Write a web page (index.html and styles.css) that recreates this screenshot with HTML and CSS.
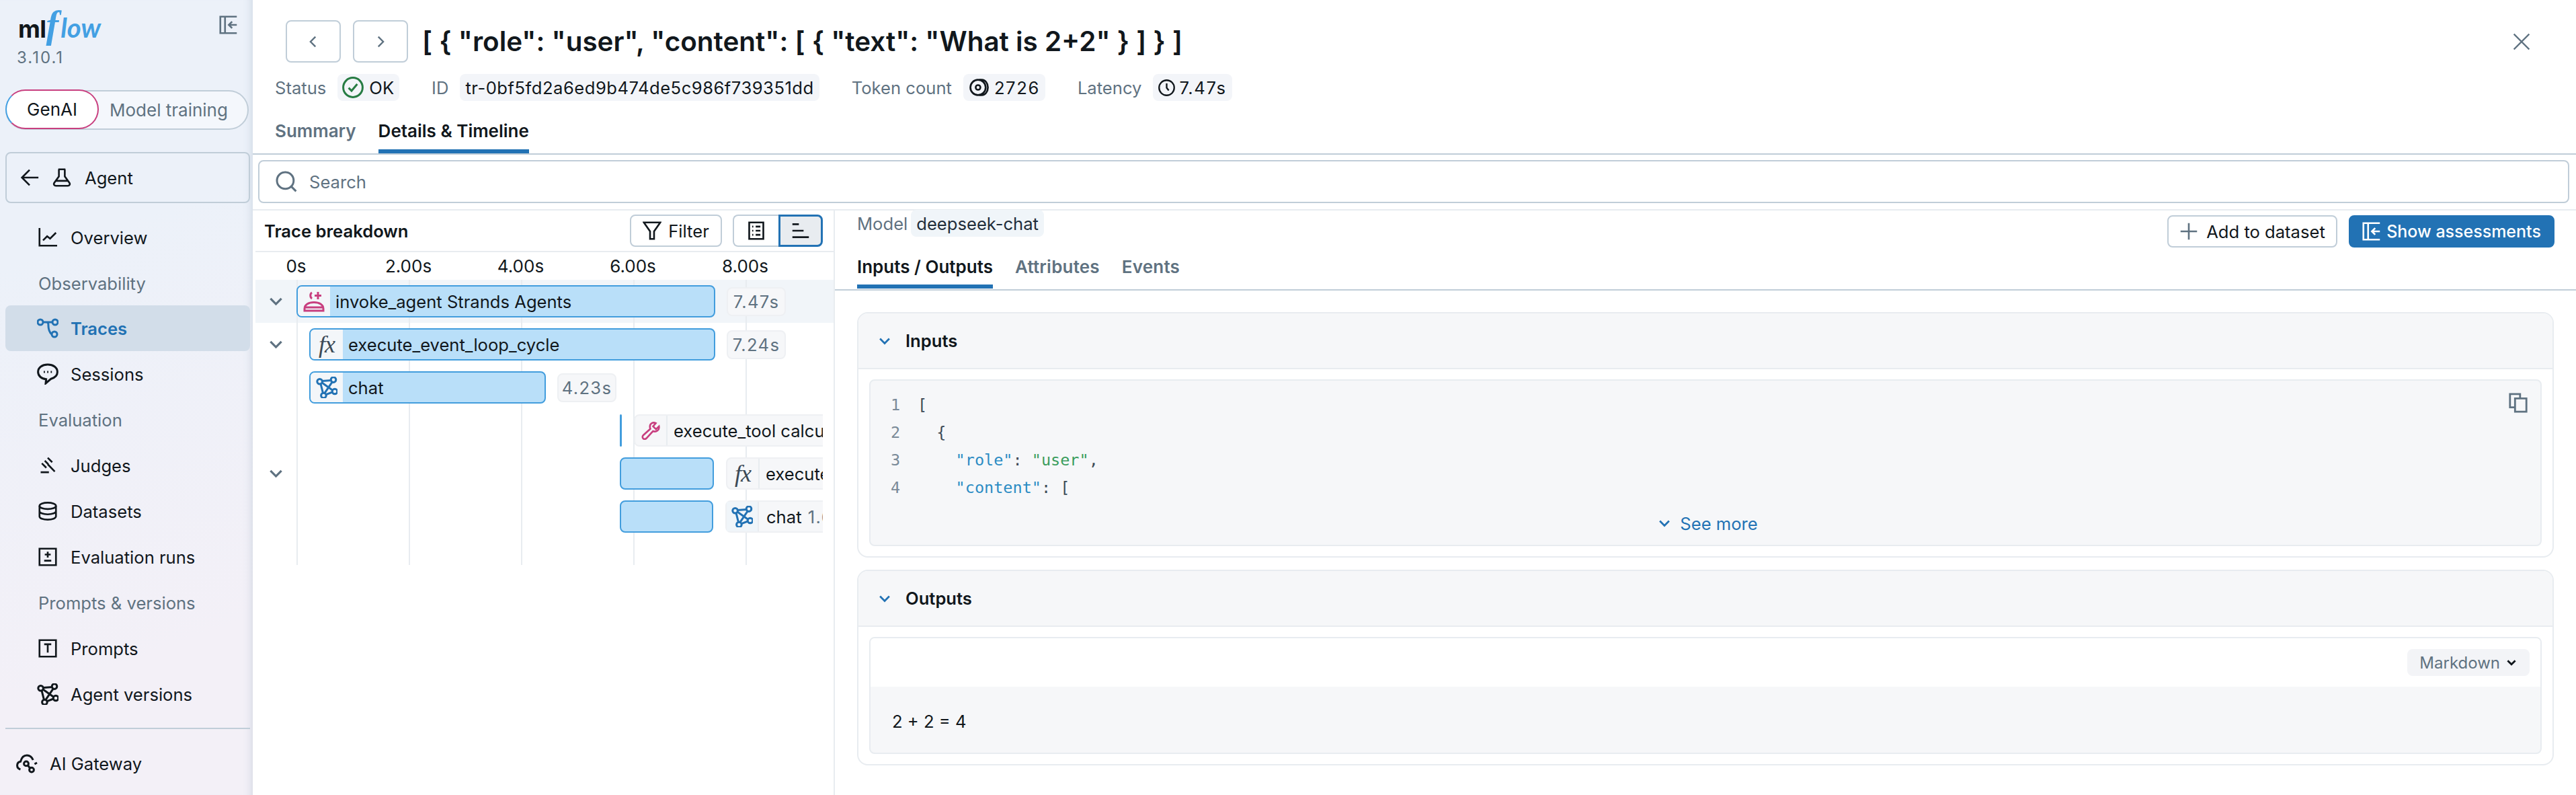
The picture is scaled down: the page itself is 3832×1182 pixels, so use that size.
FILE: index.html
```html
<!DOCTYPE html>
<html lang="en">
<head>
    <meta charset="UTF-8">
    <title>MLflow trace</title>
    <link rel="stylesheet" href="styles.css">
</head>
<body>
    <svg class="sprites" width="0" height="0">
        <symbol id="i-collapse" viewBox="0 0 16 16"><path d="M15 1H1v14h14M5 1v14M15 8H8.5M11 5.2 8.2 8l2.8 2.8"/></symbol>
        <symbol id="i-back" viewBox="0 0 16 16"><path d="M15.5 8H1.5M8 1.5 1.5 8 8 14.500"/></symbol>
        <symbol id="i-flask" viewBox="0 0 16 16"><path d="M5 1h6M5.500 1v6L1.500 12.500C.8 13.800 1.500 15 3 15h10c1.500 0 2.200-1.200 1.500-2.500L10.500 7V1M3 10.800h10"/></symbol>
        <symbol id="i-chart" viewBox="0 0 16 16"><path d="M1 0v15h15M4 10.500l3.500-3.500 2.500 2 5-5"/></symbol>
        <symbol id="i-traces" viewBox="0 0 16 16"><circle cx="2.500" cy="3.500" r="2"/><circle cx="13.500" cy="3.500" r="2"/><circle cx="13" cy="12.500" r="2"/><path d="M4.500 3.500h7M7 3.500c1.500 0 1.500 1.200 1.500 3s.8 5 2.500 6"/></symbol>
        <symbol id="i-chat" viewBox="0 0 16 16"><path d="M8 1C4 1 .8 3.200.8 6.500c0 3 2.700 5.200 6 5.400L6.500 15l4-3.400c2.800-.8 4.700-2.700 4.700-5.100C15.200 3.200 12 1 8 1Z"/><path d="M5 6.500h.9M7.600 6.500h.9M10.200 6.500h.9"/></symbol>
        <symbol id="i-gavel" viewBox="0 0 16 16"><path d="M2 13.800h7M3 6.200l3.800 3.800M5.500 4l3 3M8 1.500l3.800 3.800M8 7l6 6.200"/></symbol>
        <symbol id="i-db" viewBox="0 0 16 16"><ellipse cx="8" cy="3.500" rx="7" ry="2.700"/><path d="M1 3.500v9c0 1.500 3 2.700 7 2.700s7-1.200 7-2.700v-9M1 8c0 1.500 3 2.700 7 2.700s7-1.200 7-2.700"/></symbol>
        <symbol id="i-plusminus" viewBox="0 0 16 16"><path d="M1 1h14v14H1zM8 3.500v5M5.500 6h5M5 11.200h6"/></symbol>
        <symbol id="i-prompt" viewBox="0 0 16 16"><path d="M1 1h14v14H1zM5 4.500h6M8 4.500v7"/></symbol>
        <symbol id="i-agent" viewBox="0 0 16 16"><circle cx="2.800" cy="3.600" r="1.900"/><circle cx="13" cy="2.300" r="1.900"/><circle cx="14" cy="11" r="1.900"/><circle cx="5.700" cy="14" r="1.900"/><path d="M4.500 4.500 12.200 10M11.300 2.800 4.500 3.200M12.200 3.800 6.500 12.200M7.500 13.300l4.700-1.800M3.500 5.300l1.700 6.800"/></symbol>
        <symbol id="i-gateway" viewBox="0 0 16 16"><path d="M3.200 12.500C1.500 12 .7 10.800.8 9.300c.1-1.400 1.100-2.500 2.500-2.700C4 3.800 5.800 2 8 2c2.200 0 3.800 1.500 4.600 3.500M15.500 7.500l-1.800 1"/><circle cx="7.500" cy="8.200" r="1.700"/><circle cx="11.500" cy="12.800" r="1.700"/><path d="M8.700 9.500l1.600 2"/></symbol>
        <symbol id="i-chev-left" viewBox="0 0 16 16"><path d="M10 3.500 5.500 8l4.500 4.500"/></symbol>
        <symbol id="i-chev-right" viewBox="0 0 16 16"><path d="M6 3.500 10.500 8 6 12.500"/></symbol>
        <symbol id="i-chev-down" viewBox="0 0 16 16"><path d="M3 5.500 8 10.500l5-5"/></symbol>
        <symbol id="i-close" viewBox="0 0 16 16"><path d="M1 1l14 14M15 1 1 15"/></symbol>
        <symbol id="i-check" viewBox="0 0 16 16"><circle cx="8" cy="8" r="7.200"/><path d="M4.800 8.300 7 10.500l4.200-5" class="check-mark"/></symbol>
        <symbol id="i-coins" viewBox="0 0 16 16"><circle cx="6.800" cy="8" r="6.500"/><circle cx="6.800" cy="8" r="2"/><path d="M8 1.500h2c3 0 5.200 3 5.200 6.500s-2.200 6.500-5.200 6.500H8"/></symbol>
        <symbol id="i-clock" viewBox="0 0 16 16"><circle cx="8" cy="8" r="7.200"/><path d="M8 3.800V8l2 2.500"/></symbol>
        <symbol id="i-search" viewBox="0 0 16 16"><circle cx="7.200" cy="7.200" r="6.200"/><path d="M11.800 11.800l3.400 3.400"/></symbol>
        <symbol id="i-filter" viewBox="0 0 16 16"><path d="M1 1h14L9.700 8.500V15H6.300V8.500Z"/></symbol>
        <symbol id="i-list" viewBox="0 0 16 16"><path d="M2 1h12v14H2zM4.500 4.500h1M7.500 4.500h4M4.500 8h1M7.500 8h4M4.500 11.500h1M7.500 11.500h4"/></symbol>
        <symbol id="i-gantt" viewBox="0 0 16 16"><path d="M1 2.500h5.500M1 8h9.500M1 13.500h14"/></symbol>
        <symbol id="i-user-spark" viewBox="0 0 16 16"><path d="M1 15v-1.500C1 10.500 4 8.800 8 8.800s7 1.700 7 4.700V15ZM1 12.500h14"/><path d="M6.500 1.500C5 2.300 5 5 6.500 6M11 1v5.500M8.500 3.700h5"/></symbol>
        <symbol id="i-wrench" viewBox="0 0 16 16"><path d="M15 4.500 12.500 7 10 4.500l2.300-2.700C10 .7 7.300 2 7.300 4.800c0 .8.200 1.300.4 1.800L1.700 12c-1 1-.8 2.200-.1 2.800.8.700 2 .6 2.800-.2l5.500-6c2.800 1 5.700-.8 5.100-4.100Z"/></symbol>
        <symbol id="i-plus" viewBox="0 0 16 16"><path d="M8 1v14M1 8h14"/></symbol>
        <symbol id="i-copy" viewBox="0 0 16 16"><path d="M5 11.500H1.500V1h8v3.500M5.500 4.500h9v10.500h-9z"/></symbol>
    </svg>

    <div class="app">
        <aside class="sidebar">
            <div class="brand">
                <div class="logo"><span class="logo-ml">ml</span><span class="logo-f">f</span><span class="logo-flow">low</span></div>
                <svg class="icon icon-muted"><use href="#i-collapse"/></svg>
            </div>
            <div class="version">3.10.1</div>
            <div class="mode-switch">
                <span class="mode mode-on">GenAI</span>
                <span class="mode">Model training</span>
            </div>
            <div class="back-btn">
                <svg class="icon"><use href="#i-back"/></svg>
                <svg class="icon"><use href="#i-flask"/></svg>
                <span>Agent</span>
            </div>
            <nav class="nav">
                <a class="nav-item"><svg class="icon"><use href="#i-chart"/></svg>Overview</a>
                <div class="nav-label">Observability</div>
                <a class="nav-item nav-item-active"><svg class="icon icon-big"><use href="#i-traces"/></svg>Traces</a>
                <a class="nav-item"><svg class="icon icon-big"><use href="#i-chat"/></svg>Sessions</a>
                <div class="nav-label">Evaluation</div>
                <a class="nav-item"><svg class="icon"><use href="#i-gavel"/></svg>Judges</a>
                <a class="nav-item"><svg class="icon"><use href="#i-db"/></svg>Datasets</a>
                <a class="nav-item"><svg class="icon"><use href="#i-plusminus"/></svg>Evaluation runs</a>
                <div class="nav-label">Prompts &amp; versions</div>
                <a class="nav-item"><svg class="icon"><use href="#i-prompt"/></svg>Prompts</a>
                <a class="nav-item"><svg class="icon icon-big"><use href="#i-agent"/></svg>Agent versions</a>
            </nav>
            <div class="nav-rule"></div>
            <a class="nav-item nav-item-top"><svg class="icon icon-wide"><use href="#i-gateway"/></svg>AI Gateway</a>
        </aside>

        <main class="main">
            <header class="header">
                <div class="title-row">
                    <button class="nav-btn"><svg class="icon icon-sm icon-muted"><use href="#i-chev-left"/></svg></button>
                    <button class="nav-btn"><svg class="icon icon-sm icon-muted"><use href="#i-chev-right"/></svg></button>
                    <h1>[ { "role": "user", "content": [ { "text": "What is 2+2" } ] } ]</h1>
                    <svg class="icon close-icon"><use href="#i-close"/></svg>
                </div>
                <div class="meta-row">
                    <div class="meta"><span class="meta-key">Status</span><span class="tag"><svg class="icon icon-ok"><use href="#i-check"/></svg>OK</span></div>
                    <div class="meta"><span class="meta-key">ID</span><span class="tag tag-id">tr-0bf5fd2a6ed9b474de5c986f739351dd</span></div>
                    <div class="meta"><span class="meta-key">Token count</span><span class="tag tag-num"><svg class="icon icon-coins"><use href="#i-coins"/></svg>2726</span></div>
                    <div class="meta"><span class="meta-key">Latency</span><span class="tag tag-num"><svg class="icon icon-clock"><use href="#i-clock"/></svg>7.47s</span></div>
                </div>
                <div class="tabs tabs-main">
                    <span class="tab">Summary</span>
                    <span class="tab tab-on">Details &amp; Timeline</span>
                </div>
            </header>

            <div class="search"><svg class="icon icon-muted icon-big"><use href="#i-search"/></svg>Search</div>

            <div class="panes">
                <section class="trace">
                    <div class="trace-head">
                        <span class="trace-title">Trace breakdown</span>
                        <button class="btn btn-filter"><svg class="icon"><use href="#i-filter"/></svg>Filter</button>
                        <div class="view-switch">
                            <span class="view"><svg class="icon"><use href="#i-list"/></svg></span>
                            <span class="view view-on"><svg class="icon"><use href="#i-gantt"/></svg></span>
                        </div>
                    </div>
                    <div class="ruler">
                        <span>0s</span><span>2.00s</span><span>4.00s</span><span>6.00s</span><span>8.00s</span>
                    </div>
                    <div class="timeline">
                        <div class="grid-lines"><i></i><i></i><i></i><i></i><i></i></div>

                        <div class="tl-row tl-row-on">
                            <svg class="icon icon-sm chev"><use href="#i-chev-down"/></svg>
                            <div class="track">
                                <div class="bar" style="width:623px">
                                    <span class="bar-icon"><svg class="icon icon-big ic-pink"><use href="#i-user-spark"/></svg></span>
                                    <span class="bar-text">invoke_agent Strands Agents</span>
                                </div>
                                <span class="dur">7.47s</span>
                            </div>
                        </div>
                        <div class="tl-row">
                            <svg class="icon icon-sm chev"><use href="#i-chev-down"/></svg>
                            <div class="track">
                                <div class="bar" style="margin-left:19px;width:604px">
                                    <span class="bar-icon"><span class="fx">fx</span></span>
                                    <span class="bar-text">execute_event_loop_cycle</span>
                                </div>
                                <span class="dur">7.24s</span>
                            </div>
                        </div>
                        <div class="tl-row">
                            <span class="chev-gap"></span>
                            <div class="track">
                                <div class="bar" style="margin-left:19px;width:352px">
                                    <span class="bar-icon"><svg class="icon icon-big ic-blue"><use href="#i-agent"/></svg></span>
                                    <span class="bar-text">chat</span>
                                </div>
                                <span class="dur">4.23s</span>
                            </div>
                        </div>
                        <div class="tl-row">
                            <span class="chev-gap"></span>
                            <div class="track">
                                <div class="bar bar-thin" style="margin-left:481px;width:3px"></div>
                                <div class="label-out">
                                    <span class="out-icon"><svg class="icon ic-pink"><use href="#i-wrench"/></svg></span>
                                    <span class="out-text">execute_tool calculator</span>
                                </div>
                            </div>
                        </div>
                        <div class="tl-row">
                            <svg class="icon icon-sm chev"><use href="#i-chev-down"/></svg>
                            <div class="track">
                                <div class="bar" style="margin-left:481px;width:140px"></div>
                                <div class="label-out">
                                    <span class="out-icon"><span class="fx">fx</span></span>
                                    <span class="out-text">execute_event_loop_cycle</span>
                                </div>
                            </div>
                        </div>
                        <div class="tl-row">
                            <span class="chev-gap"></span>
                            <div class="track">
                                <div class="bar" style="margin-left:481px;width:139px"></div>
                                <div class="label-out">
                                    <span class="out-icon out-icon-blue"><svg class="icon icon-big ic-blue"><use href="#i-agent"/></svg></span>
                                    <span class="out-text out-text-tight">chat <em>1.68s</em></span>
                                </div>
                            </div>
                        </div>
                    </div>
                </section>

                <section class="detail">
                    <div class="detail-top">
                        <div class="detail-left">
                            <div class="meta meta-model"><span class="meta-key">Model</span><span class="tag tag-blue">deepseek-chat</span></div>
                            <div class="tabs tabs-detail">
                                <span class="tab tab-on">Inputs / Outputs</span>
                                <span class="tab">Attributes</span>
                                <span class="tab">Events</span>
                            </div>
                        </div>
                        <div class="actions">
                            <button class="btn btn-add"><svg class="icon icon-muted"><use href="#i-plus"/></svg>Add to dataset</button>
                            <button class="btn btn-primary"><svg class="icon"><use href="#i-collapse"/></svg>Show assessments</button>
                        </div>
                    </div>

                    <div class="sections">
                        <div class="panel">
                            <div class="panel-head"><svg class="icon icon-xs"><use href="#i-chev-down"/></svg>Inputs</div>
                            <div class="panel-body">
                                <div class="code-box">
                                    <svg class="icon icon-muted copy-icon"><use href="#i-copy"/></svg>
                                    <div class="code-line"><span class="ln">1</span><span class="pun">[</span></div>
                                    <div class="code-line"><span class="ln">2</span><span class="pun">  {</span></div>
                                    <div class="code-line"><span class="ln">3</span><span class="pun">    </span><span class="key">"role"</span><span class="pun">: </span><span class="str">"user"</span><span class="pun">,</span></div>
                                    <div class="code-line"><span class="ln">4</span><span class="pun">    </span><span class="key">"content"</span><span class="pun">: [</span></div>
                                    <div class="see-more"><svg class="icon icon-xs"><use href="#i-chev-down"/></svg>See more</div>
                                </div>
                            </div>
                        </div>
                        <div class="panel">
                            <div class="panel-head"><svg class="icon icon-xs"><use href="#i-chev-down"/></svg>Outputs</div>
                            <div class="panel-body">
                                <div class="output-box">
                                    <div class="output-bar"><span class="format">Markdown<svg class="icon icon-xs"><use href="#i-chev-down"/></svg></span></div>
                                    <div class="output-text">2 + 2 = 4</div>
                                </div>
                            </div>
                        </div>
                    </div>
                </section>
            </div>
        </main>
    </div>
</body>
</html>
```

FILE: styles.css
```css
* {
    box-sizing: border-box;
}
body {
    margin: 0;
    font-family: Inter, "Noto Sans", sans-serif;
    font-size: 25.6px;
    color: #11171c;
    background: #fff;
}
button {
    font: inherit;
    color: inherit;
    background: #fff;
    cursor: pointer;
}
.sprites {
    position: absolute;
}
.app {
    display: flex;
    width: 3832px;
    height: 1182px;
    overflow: hidden;
}

/* icons */
.icon {
    width: 28px;
    height: 28px;
    flex: none;
    fill: none;
    stroke: currentColor;
    stroke-width: 1.5;
}
.icon-sm {
    width: 26px;
    height: 26px;
}
.icon-xs {
    width: 22px;
    height: 22px;
    stroke-width: 2;
}
.icon-big {
    width: 32px;
    height: 32px;
    margin: 0 -2px;
}
.icon-muted {
    color: #5f7281;
}
.ic-pink {
    color: #c83f7f;
}
.ic-blue {
    color: #2272b4;
}
.fx {
    font: italic 36px "Liberation Serif", serif;
    letter-spacing: -1px;
    color: #3c4a56;
}

/* sidebar */
.sidebar {
    width: 376px;
    flex: none;
    padding: 0 4px 0 8px;
    background: linear-gradient(160deg, #ecf1f9 30%, #f3f0f7 80%);
    box-shadow: inset -14px 0 14px -14px rgba(150, 170, 190, 0.45);
}
.brand {
    display: flex;
    justify-content: space-between;
    align-items: center;
    height: 74px;
    padding: 0 18px 0 19px;
}
.logo {
    display: flex;
    align-items: baseline;
    line-height: 1;
    white-space: nowrap;
}
.logo-ml {
    font-weight: 700;
    font-size: 36px;
    letter-spacing: -0.5px;
    color: #11171c;
}
.logo-f {
    font-family: "Liberation Serif", serif;
    font-style: italic;
    font-weight: 700;
    font-size: 56px;
    color: #43a0e3;
    margin-right: 3px;
}
.logo-flow {
    font-family: Lato, sans-serif;
    font-style: italic;
    font-size: 40px;
    font-weight: 700;
    color: #43a0e3;
}
.version {
    height: 60px;
    padding: 0 0 0 17px;
    line-height: 24px;
    color: #5f7281;
    font-size: 24px;
    letter-spacing: 2px;
}
.mode-switch {
    display: flex;
    align-items: center;
    width: 362px;
    height: 59px;
    border: 2px solid #c0cdd8;
    border-radius: 30px;
    background: rgba(255, 255, 255, 0.45);
}
.mode {
    padding-left: 16px;
    color: #5f7281;
    font-size: 26px;
    white-space: nowrap;
}
.mode-on {
    width: 139px;
    height: 59px;
    margin: -2px 0 0 -2px;
    padding: 0;
    line-height: 55px;
    text-align: center;
    color: #11171c;
    background: #fff;
    border: 2px solid #c83f7f;
    border-left-color: #43a0e3;
    border-top-color: #c83f7f;
    border-radius: 30px;
}
.back-btn {
    display: flex;
    align-items: center;
    gap: 20px;
    width: 364px;
    height: 76px;
    margin-top: 33px;
    padding-left: 20px;
    border: 2px solid #c0cdd8;
    border-radius: 8px;
}
.nav {
    margin-top: 17px;
}
.nav-item {
    display: flex;
    align-items: center;
    gap: 20px;
    width: 364px;
    height: 68px;
    padding-left: 49px;
    border-radius: 8px;
}
.nav-item-active {
    margin-top: -1px;
    color: #2272b4;
    font-weight: 600;
    background: #d2dde9;
}
.nav-item-top {
    margin-top: 17px;
    padding-left: 16px;
    gap: 18px;
}
.nav-label {
    display: flex;
    align-items: center;
    height: 68px;
    padding-left: 49px;
    color: #5f7281;
}
.nav-rule {
    width: 364px;
    height: 2px;
    margin-top: 16px;
    background: #c0cdd8;
}
.icon-wide {
    width: 32px;
    height: 32px;
}

/* header */
.main {
    flex: 1;
    min-width: 0;
}
.header {
    height: 230px;
    padding-top: 30px;
    border-bottom: 2px solid #c0cdd8;
}
.title-row {
    display: flex;
    align-items: center;
    height: 63px;
    padding: 0 68px 0 49px;
}
.nav-btn {
    display: flex;
    justify-content: center;
    align-items: center;
    width: 82px;
    height: 63px;
    margin-right: 18px;
    padding: 0;
    border: 2px solid #c0cdd8;
    border-radius: 8px;
}
h1 {
    flex: 1;
    margin: 0 0 0 3px;
    font-size: 40.4px;
    font-weight: 600;
    line-height: 63px;
}
.close-icon {
    color: #5f7281;
    width: 26px;
    height: 26px;
    stroke-width: 1.4;
}
.meta-row {
    display: flex;
    gap: 48px;
    height: 40px;
    margin-top: 17px;
    padding-left: 33px;
}
.meta {
    display: flex;
    align-items: center;
    gap: 17px;
}
.meta-key {
    color: #5f7281;
}
.tag {
    display: flex;
    align-items: center;
    gap: 8px;
    height: 40px;
    padding: 0 8px;
    border-radius: 8px;
    background: #f3f5f9;
    white-space: nowrap;
}
.tag .icon-ok {
    width: 32px;
    height: 32px;
    margin-left: -1px;
    color: #277c43;
}
.tag-id {
    letter-spacing: 0.5px;
}
.tag-num {
    gap: 6px;
    letter-spacing: 1.6px;
}
.icon-coins {
    width: 32px;
    height: 28px;
}
.icon-clock {
    width: 25px;
    height: 25px;
}
.tag-blue {
    background: #f0f5f9;
    color: #1f2d3a;
}
.tabs {
    display: flex;
    gap: 33px;
}
.tab {
    height: 58px;
    color: #5f7281;
    font-size: 26px;
    font-weight: 600;
    line-height: 50px;
}
.tab-on {
    color: #11171c;
    border-bottom: 6px solid #2272b4;
}
.tabs-main {
    margin-top: 20px;
    padding-left: 33px;
}

/* search */
.search {
    display: flex;
    align-items: center;
    gap: 20px;
    height: 64px;
    margin: 8px 10px 0 8px;
    padding-left: 26px;
    border: 2px solid #c0cdd8;
    border-radius: 8px;
    color: #5f7281;
}
.panes {
    display: flex;
    height: 871px;
    margin-top: 9px;
    border-top: 2px solid #e8ecf0;
}

/* trace pane */
.trace {
    width: 864px;
    flex: none;
    padding-left: 4px;
}
.trace-head {
    display: flex;
    align-items: center;
    height: 62px;
    padding-right: 16px;
    border-bottom: 2px solid #e8ecf0;
}
.trace-title {
    flex: 1;
    padding-left: 13px;
    font-weight: 600;
}
.btn {
    display: flex;
    align-items: center;
    justify-content: center;
    gap: 10px;
    height: 48px;
    padding: 0;
    border: 2px solid #c0cdd8;
    border-radius: 8px;
    white-space: nowrap;
}
.btn-filter {
    width: 137px;
    margin-right: 16px;
}
.view-switch {
    display: flex;
    height: 48px;
}
.view {
    display: flex;
    justify-content: center;
    align-items: center;
    width: 68px;
    border: 2px solid #c0cdd8;
    border-radius: 8px 0 0 8px;
    border-right: 0;
}
.view-on {
    width: 66px;
    background: #e8ecf0;
    border: 3px solid #2272b4;
    border-radius: 0 8px 8px 0;
}
.ruler {
    display: grid;
    grid-template-columns: repeat(5, 167px);
    height: 41px;
    margin-left: -23px;
    line-height: 42px;
    font-size: 26px;
    text-align: center;
    white-space: nowrap;
}
.timeline {
    position: relative;
    height: 424px;
}
.grid-lines {
    position: absolute;
    top: 0;
    bottom: 0;
    left: 61px;
    display: flex;
    gap: 165px;
    z-index: 1;
}
.grid-lines i {
    width: 2px;
    background: #e8ecf0;
}
.tl-row {
    position: relative;
    display: flex;
    align-items: center;
    height: 64px;
    padding-right: 16px;
}
.tl-row-on {
    background: #f1f5f9;
}
.chev {
    width: 61px;
    color: #5f7281;
    stroke-width: 2;
}
.chev-gap {
    width: 61px;
    flex: none;
}
.track {
    position: relative;
    z-index: 2;
    flex: 1;
    min-width: 0;
    display: flex;
    align-items: center;
    overflow: hidden;
}
.bar {
    display: flex;
    flex: none;
    height: 48px;
    border: 2px solid #429ddd;
    border-radius: 8px;
    background: #b9dff9;
    overflow: hidden;
}
.bar-thin {
    border-width: 0;
    border-radius: 2px;
    background: #429ddd;
}
.bar-icon {
    display: flex;
    justify-content: center;
    align-items: center;
    width: 48px;
    flex: none;
    background: #f3f6f9;
}
.bar-text {
    padding-left: 8px;
    line-height: 46px;
    white-space: nowrap;
}
.dur {
    flex: none;
    width: 88px;
    height: 43px;
    margin-left: 17px;
    border: 2px solid #eef0f3;
    border-radius: 8px;
    background: #f6f7f9;
    color: #5f7281;
    line-height: 39px;
    text-align: center;
    letter-spacing: 1.3px;
}
.label-out {
    display: flex;
    flex: none;
    height: 48px;
    margin-left: 18px;
    border: 2px solid #eef0f3;
    border-radius: 8px;
    background: #f6f7f9;
}
.out-icon {
    display: flex;
    justify-content: center;
    align-items: center;
    width: 48px;
    border-right: 2px solid #e8ecf0;
}
.out-icon-blue {
    background: #f0f5f9;
}
.out-text {
    padding: 0 9px;
    line-height: 46px;
    white-space: nowrap;
}
.out-text-tight {
    padding-left: 11px;
}
.out-text-tight em {
    font-style: normal;
    color: #5f7281;
    letter-spacing: 1.5px;
    padding-left: 2px;
}

/* detail pane */
.detail {
    flex: 1;
    min-width: 0;
    border-left: 2px solid #e8ecf0;
}
.detail-top {
    display: flex;
    justify-content: space-between;
    height: 119px;
    padding: 0 32px 0 33px;
    border-bottom: 2px solid #c0cdd8;
}
.detail-left {
    display: flex;
    flex: 1;
    flex-direction: column;
}
.meta-model {
    gap: 5px;
    height: 40px;
    margin-top: -1px;
}
.tabs-detail {
    margin-top: 18px;
}
.tabs-detail .tab {
    height: 59px;
    line-height: 53px;
    letter-spacing: 0.2px;
}
.tabs-detail .tab-on {
    letter-spacing: 0;
}
.actions {
    display: flex;
    gap: 17px;
    padding-top: 7px;
}
.btn-add {
    width: 253px;
    gap: 12px;
}
.btn-primary {
    width: 306px;
    gap: 8px;
    background: #2272b4;
    border-color: #2272b4;
    color: #fff;
    font-size: 25px;
    font-weight: 500;
}
.sections {
    display: flex;
    flex-direction: column;
    gap: 18px;
    padding: 32px 33px 0 33px;
}
.panel {
    border: 2px solid #e8ecf0;
    border-radius: 16px;
    overflow: hidden;
}
.panel-head {
    display: flex;
    align-items: center;
    gap: 20px;
    height: 83px;
    padding-left: 28px;
    background: #f6f7f9;
    border-bottom: 2px solid #e8ecf0;
    font-weight: 600;
}
.panel-head .icon {
    color: #2272b4;
}
.panel-body {
    padding: 15px 16px;
}
.code-box {
    position: relative;
    height: 248px;
    padding: 16px 0 0 30px;
    border: 2px solid #e8ecf0;
    border-radius: 8px;
    background: #f6f7f9;
    font-family: "DejaVu Sans Mono", monospace;
    font-size: 23.5px;
}
.copy-icon {
    position: absolute;
    top: 18px;
    right: 18px;
    width: 30px;
    height: 30px;
    stroke-width: 1.5;
}
.code-line {
    height: 41px;
    line-height: 41px;
    white-space: pre;
}
.ln {
    display: inline-block;
    width: 40px;
    color: #7a8a98;
}
.pun {
    color: #3c4a56;
}
.key {
    color: #2b8cc4;
}
.str {
    color: #3a9d5d;
}
.see-more {
    display: flex;
    justify-content: center;
    align-items: center;
    gap: 12px;
    height: 40px;
    margin-top: 12px;
    margin-left: -24px;
    font-family: Inter, sans-serif;
    font-size: 25.6px;
    color: #2272b4;
}
.output-box {
    height: 174px;
    border: 2px solid #e8ecf0;
    border-radius: 8px;
    background: #f6f7f9;
    overflow: hidden;
}
.output-bar {
    display: flex;
    justify-content: flex-end;
    height: 72px;
    padding: 16px 16px 0 0;
    background: #fff;
}
.format {
    display: flex;
    align-items: center;
    gap: 8px;
    height: 40px;
    padding: 0 18px;
    border-radius: 8px;
    background: #f3f4f7;
    color: #5f7281;
    font-size: 24px;
}
.format .icon {
    color: #11171c;
    stroke-width: 2.5;
    width: 18px;
    height: 18px;
}
.output-text {
    padding: 35px 0 0 32px;
    line-height: 34px;
}
```
